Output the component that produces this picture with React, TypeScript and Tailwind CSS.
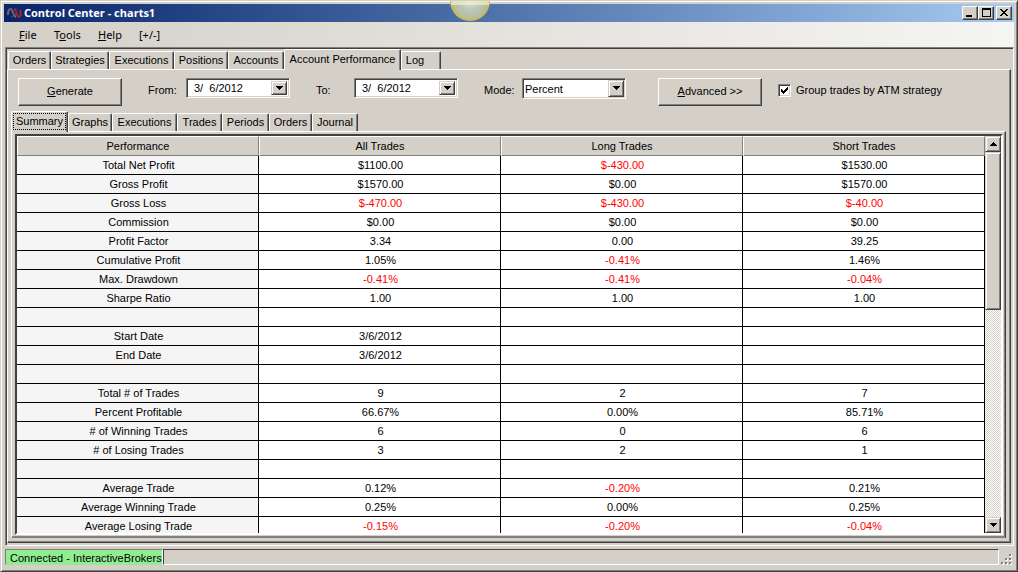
import React from "react";

type Tab = { label: string; width: string; active?: boolean };

const mainTabs: Tab[] = [
  { label: "Orders", width: "w-[43px]" },
  { label: "Strategies", width: "w-[58px]" },
  { label: "Executions", width: "w-[65px]" },
  { label: "Positions", width: "w-[54px]" },
  { label: "Accounts", width: "w-[56px]" },
  { label: "Account Performance", width: "w-[117px]", active: true },
  { label: "Log", width: "w-[40px] pr-3" },
];

const subTabs: Tab[] = [
  { label: "Summary", width: "w-[57px]", active: true },
  { label: "Graphs", width: "w-[44px]" },
  { label: "Executions", width: "w-[65px]" },
  { label: "Trades", width: "w-[45px]" },
  { label: "Periods", width: "w-[47px]" },
  { label: "Orders", width: "w-[43px]" },
  { label: "Journal", width: "w-[46px]" },
];

const rows = [
  ["Total Net Profit", "$1100.00", "$-430.00", "$1530.00"],
  ["Gross Profit", "$1570.00", "$0.00", "$1570.00"],
  ["Gross Loss", "$-470.00", "$-430.00", "$-40.00"],
  ["Commission", "$0.00", "$0.00", "$0.00"],
  ["Profit Factor", "3.34", "0.00", "39.25"],
  ["Cumulative Profit", "1.05%", "-0.41%", "1.46%"],
  ["Max. Drawdown", "-0.41%", "-0.41%", "-0.04%"],
  ["Sharpe Ratio", "1.00", "1.00", "1.00"],
  ["", "", "", ""],
  ["Start Date", "3/6/2012", "", ""],
  ["End Date", "3/6/2012", "", ""],
  ["", "", "", ""],
  ["Total # of Trades", "9", "2", "7"],
  ["Percent Profitable", "66.67%", "0.00%", "85.71%"],
  ["# of Winning Trades", "6", "0", "6"],
  ["# of Losing Trades", "3", "2", "1"],
  ["", "", "", ""],
  ["Average Trade", "0.12%", "-0.20%", "0.21%"],
  ["Average Winning Trade", "0.25%", "0.00%", "0.25%"],
  ["Average Losing Trade", "-0.15%", "-0.20%", "-0.04%"],
];

const Arrow = ({ up }: { up?: boolean }) => (
  <svg width="7" height="4" viewBox="0 0 7 4" shapeRendering="crispEdges">
    <path d={up ? "M3 0h1v1h1v1h1v1h1v1H0V3h1V2h1V1h1z" : "M0 0h7v1H6v1H5v1H4v1H3V3H2V2H1V1H0z"} />
  </svg>
);

const raised =
  "border border-t-[#d4d0c8] border-l-[#d4d0c8] border-r-[#404040] border-b-[#404040] bg-[#d4d0c8] shadow-[inset_1px_1px_0_#fff,inset_-1px_-1px_0_#808080]";
const raisedBig =
  "border border-t-white border-l-white border-r-[#404040] border-b-[#404040] bg-[#d4d0c8] shadow-[inset_-1px_-1px_0_#808080]";
const sunken =
  "border border-t-[#808080] border-l-[#808080] border-r-white border-b-white bg-white shadow-[inset_1px_1px_0_#404040,inset_-1px_-1px_0_#d4d0c8]";

const TabStrip = ({ tabs, focus }: { tabs: Tab[]; focus?: boolean }) => (
  <div role="tablist" className="flex h-5 items-end">
    {tabs.map((tab) => (
      <button
        key={tab.label}
        role="tab"
        aria-selected={!!tab.active}
        className={`${tab.width} ${
          tab.active ? "-mb-px h-[21px] pb-px" : "h-[18px] pt-px"
        } relative flex shrink-0 items-center justify-center whitespace-nowrap rounded-t-[2px] border-t border-r border-l border-t-white border-l-white border-r-[#404040] bg-[#d4d0c8] shadow-[inset_-1px_0_0_#808080]`}
      >
        {tab.label}
        {tab.active && focus && (
          <span className="absolute inset-x-px top-px bottom-0.5 border border-dotted border-black"></span>
        )}
      </button>
    ))}
  </div>
);

const DateField = ({ id }: { id: string }) => (
  <div className={`flex h-5 w-[104px] p-0.5 ${sunken}`}>
    <input id={id} type="text" defaultValue="3/  6/2012" className="w-0 grow bg-transparent pt-px pl-[5px] outline-none" />
    <button aria-label="Open calendar" className={`flex w-4 items-center justify-center ${raised}`}>
      <Arrow />
    </button>
  </div>
);

const TitleBar = () => (
  <div className="flex h-[18px] items-center bg-linear-to-r from-[#0a246a] to-[#a6caf0] pr-0.5 pl-[3px]">
    <svg width="15" height="12" viewBox="0 0 15 12" fill="none" strokeWidth="2">
      <path d="M1 8C1 4 2 2 3.500 2C6 2 6 9 9 10" stroke="#75686e" />
      <path d="M4 9C5 11 7 9 6.500 6C6 3 4 1 3 3" stroke="#5c5668" strokeWidth="1" />
      <path d="M7 2C10 2 9 9 11.500 10C14 10 14 5 13 3" stroke="#a02830" />
      <path d="M9 8C8 5 9 2 11 2" stroke="#7c2438" strokeWidth="1" />
    </svg>
    <h1 className="ml-0.5 grow font-['Open_Sans','Noto_Sans',sans-serif] text-[11px] font-bold text-white">
      Control Center - charts1
    </h1>
    <button aria-label="Minimize" className={`flex h-3.5 w-4 items-end pb-0.5 pl-[3px] ${raisedBig}`}>
      <svg width="6" height="2">
        <path d="M0 0h6v2H0z" />
      </svg>
    </button>
    <button aria-label="Maximize" className={`flex h-3.5 w-4 justify-center pt-px ${raisedBig}`}>
      <svg width="9" height="9" shapeRendering="crispEdges">
        <path d="M0 0h9v9H0zM1 2v6h7V2z" fillRule="evenodd" />
      </svg>
    </button>
    <button aria-label="Close" className={`ml-0.5 flex h-3.5 w-4 justify-center pt-0.5 ${raisedBig}`}>
      <svg width="8" height="7" shapeRendering="crispEdges">
        <path d="M0 0h2v1h1v1h2V1h1V0h2v1H7v1H6v1H5v1h1v1h1v1h1v1H6V6H5V5H3v1H2v1H0V6h1V5h1V4h1V3H2V2H1V1H0z" />
      </svg>
    </button>
  </div>
);

const Toolbar = () => (
  <div className="flex h-[41px] items-start pt-2 pl-[7px]">
    <button className={`h-7 w-[104px] shrink-0 ${raisedBig}`}>
      <u>G</u>enerate
    </button>
    <label htmlFor="from" className="ml-[26px] w-[38px] pt-1.5">
      From:
    </label>
    <DateField id="from" />
    <label htmlFor="to" className="ml-[26px] w-[38px] pt-1.5">
      To:
    </label>
    <DateField id="to" />
    <label htmlFor="mode" className="ml-[26px] w-[38px] pt-1.5">
      Mode:
    </label>
    <div className={`relative h-[21px] w-[104px] p-0.5 ${sunken}`}>
      <select id="mode" className="block h-full w-full appearance-none bg-transparent pt-0.5 outline-none">
        <option>Percent</option>
      </select>
      <span className={`pointer-events-none absolute inset-y-px right-px flex w-4 items-center justify-center ${raised}`}>
        <Arrow />
      </span>
    </div>
    <button className={`ml-8 h-7 w-[104px] shrink-0 ${raisedBig}`}>
      <u>A</u>dvanced &gt;&gt;
    </button>
    <label className="ml-4 flex items-center gap-[5px] pt-1.5">
      <span className={`relative flex h-[13px] w-[13px] items-center justify-center ${sunken}`}>
        <input type="checkbox" defaultChecked className="peer absolute inset-0 appearance-none" />
        <svg className="pointer-events-none hidden peer-checked:block" width="7" height="7" shapeRendering="crispEdges">
          <path d="M0 2h1v1h1v1h1V3h1V2h1V1h1V0h1v3H6v1H5v1H4v1H3v1H2V6H1V5H0z" />
        </svg>
      </span>
      Group trades by ATM strategy
    </label>
  </div>
);

const SummaryTable = () => (
  <table className="w-full table-fixed border-separate border-spacing-0 self-start text-center">
    <thead>
      <tr className="h-5">
        {["Performance", "All Trades", "Long Trades", "Short Trades"].map((h) => (
          <th
            key={h}
            className="border border-t-white border-r-[#808080] border-b-[#808080] border-l-white bg-[#d4d0c8] p-0 pt-px font-normal"
          >
            {h}
          </th>
        ))}
      </tr>
    </thead>
    <tbody>
      {rows.map(([name, ...values], i) => (
        <tr key={i} className="h-[19px]">
          <th className="border-r border-b border-black bg-[#f5f5f5] p-0 pt-px pl-0.5 font-normal">{name}</th>
          {values.map((v, j) => (
            <td
              key={j}
              className={`border-r border-b border-black bg-white p-0 pt-px pl-0.5 ${v.includes("-") ? "text-[#ff0000]" : ""}`}
            >
              {v}
            </td>
          ))}
        </tr>
      ))}
    </tbody>
  </table>
);

const ScrollBar = () => (
  <div className="flex w-4 shrink-0 flex-col bg-[repeating-conic-gradient(#d4d0c8_0_25%,#fff_0_50%)] bg-size-[2px_2px]">
    <button aria-label="Scroll up" className={`flex h-4 items-center justify-center ${raised}`}>
      <Arrow up />
    </button>
    <div className={`h-[158px] ${raised}`}></div>
    <button aria-label="Scroll down" className={`mt-auto flex h-4 items-center justify-center ${raised}`}>
      <Arrow />
    </button>
  </div>
);

const StatusBar = () => (
  <div className="flex h-[22px] items-start pt-[3px] pl-px">
    <div className="flex h-4 w-[158px] items-center border border-t-[#808080] border-r-white border-b-[#90ee90] border-l-[#808080] bg-[#90ee90] pt-0.5 pl-1 whitespace-nowrap">
      Connected - InteractiveBrokers
    </div>
    <div className="h-4 grow border border-t-[#404040] border-r-white border-b-white border-l-[#404040]"></div>
    <svg className="mt-1 ml-0.5" width="13" height="13" shapeRendering="crispEdges">
      <path d="M9 2h2v2H9zM5 6h2v2H5zM9 6h2v2H9zM1 10h2v2H1zM5 10h2v2H5zM9 10h2v2H9z" fill="#fff" />
      <path d="M8 1h2v2H8zM4 5h2v2H4zM8 5h2v2H8zM0 9h2v2H0zM4 9h2v2H4zM8 9h2v2H8z" fill="#808080" />
    </svg>
  </div>
);

export default function App() {
  return (
    <div className="relative flex h-screen flex-col border border-t-[#d4d0c8] border-r-[#404040] border-b-[#404040] border-l-[#d4d0c8] bg-[#d4d0c8] p-[3px] font-['Liberation_Sans',Arial,sans-serif] text-[11px] leading-[13px] text-black shadow-[inset_1px_1px_0_#fff,inset_-1px_-1px_0_#808080]">
      <TitleBar />
      <svg className="pointer-events-none absolute top-0 left-[449px]" width="40" height="20">
        <defs>
          <radialGradient id="glow" cx="20" cy="0" r="20" gradientUnits="userSpaceOnUse">
            <stop offset="0" stopColor="#dcdfd2" />
            <stop offset="0.5" stopColor="#bac6bc" />
            <stop offset="0.85" stopColor="#b8bf98" />
            <stop offset="1" stopColor="#ccb347" />
          </radialGradient>
        </defs>
        <circle cx="20" cy="0" r="20" fill="url(#glow)" />
        <path d="M1 0h38v4H1z" fill="#fff6c8" fillOpacity="0.6" />
      </svg>
      <nav className="flex h-[25px] items-center bg-linear-to-r from-[#d4d0c8] to-[#f5f5f3] pl-[15px] font-['Noto_Sans',sans-serif]">
        <button className="w-[35px] text-left">
          <u>F</u>ile
        </button>
        <button className="w-11 text-left">
          T<u>o</u>ols
        </button>
        <button className="w-[41px] text-left">
          <u>H</u>elp
        </button>
        <button>[+/-]</button>
      </nav>
      <main className="ml-px flex min-h-0 grow flex-col border border-t-[#808080] border-r-white border-b-white border-l-[#808080] pr-px pb-px shadow-[inset_1px_1px_0_#404040]">
        <div className="flex min-h-0 grow flex-col pt-px pr-px pb-px pl-px">
          <div className="pl-px">
            <TabStrip tabs={mainTabs} />
          </div>
          <div className="flex min-h-0 grow flex-col border border-t-white border-r-[#404040] border-b-[#404040] border-l-white pr-1 pb-1 pl-[3px] shadow-[inset_-1px_-1px_0_#808080]">
            <Toolbar />
            <TabStrip tabs={subTabs} focus />
            <div className="flex min-h-0 grow flex-col border border-t-white border-r-[#404040] border-b-[#808080] border-l-white p-0.5 pl-[3px] shadow-[inset_-1px_-1px_0_#808080]">
              <div className="flex min-h-0 grow overflow-hidden border-2 border-t-[#404040] border-r-white border-b-white border-l-[#404040] bg-white">
                <SummaryTable />
                <ScrollBar />
              </div>
            </div>
          </div>
        </div>
      </main>
      <StatusBar />
    </div>
  );
}
